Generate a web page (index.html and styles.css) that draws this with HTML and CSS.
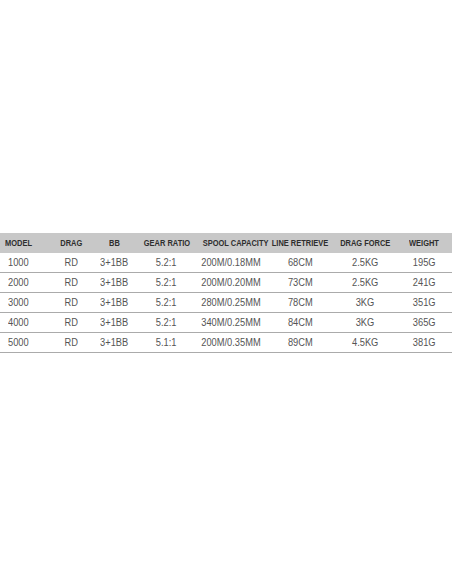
FILE: index.html
```html
<!DOCTYPE html>
<html>
<head>
<meta charset="utf-8">
<link rel="stylesheet" href="styles.css">
</head>
<body>
<div class="page">
  <table class="specs">
    <colgroup>
      <col class="c1"><col class="c2"><col class="c3"><col class="c4"><col class="c5"><col class="c6"><col class="c7"><col class="c8">
    </colgroup>
    <thead>
      <tr><th class="first"><span>MODEL</span></th><th><span>DRAG</span></th><th><span>BB</span></th><th><span>GEAR RATIO</span></th><th><span>SPOOL CAPACITY</span></th><th><span>LINE RETRIEVE</span></th><th><span>DRAG FORCE</span></th><th><span>WEIGHT</span></th></tr>
    </thead>
    <tbody>
      <tr><td class="first"><span>1000</span></td><td><span>RD</span></td><td><span>3+1BB</span></td><td><span>5.2:1</span></td><td><span>200M/0.18MM</span></td><td><span>68CM</span></td><td><span>2.5KG</span></td><td><span>195G</span></td></tr>
      <tr><td class="first"><span>2000</span></td><td><span>RD</span></td><td><span>3+1BB</span></td><td><span>5.2:1</span></td><td><span>200M/0.20MM</span></td><td><span>73CM</span></td><td><span>2.5KG</span></td><td><span>241G</span></td></tr>
      <tr><td class="first"><span>3000</span></td><td><span>RD</span></td><td><span>3+1BB</span></td><td><span>5.2:1</span></td><td><span>280M/0.25MM</span></td><td><span>78CM</span></td><td><span>3KG</span></td><td><span>351G</span></td></tr>
      <tr><td class="first"><span>4000</span></td><td><span>RD</span></td><td><span>3+1BB</span></td><td><span>5.2:1</span></td><td><span>340M/0.25MM</span></td><td><span>84CM</span></td><td><span>3KG</span></td><td><span>365G</span></td></tr>
      <tr><td class="first"><span>5000</span></td><td><span>RD</span></td><td><span>3+1BB</span></td><td><span>5.1:1</span></td><td><span>200M/0.35MM</span></td><td><span>89CM</span></td><td><span>4.5KG</span></td><td><span>381G</span></td></tr>
    </tbody>
  </table>
</div>
</body>
</html>
```

FILE: styles.css
```css
html, body {
  margin: 0;
  padding: 0;
  background: #ffffff;
}
.page {
  width: 452px;
  height: 584px;
  padding-top: 233px;
  box-sizing: border-box;
}
.specs {
  width: 452px;
  border-collapse: collapse;
  table-layout: fixed;
  font-family: "Liberation Sans", Arial, sans-serif;
}
.c1 { width: 50px; }
.c2 { width: 42px; }
.c3 { width: 45px; }
.c4 { width: 59px; }
.c5 { width: 70px; }
.c6 { width: 68px; }
.c7 { width: 62px; }
.c8 { width: 56px; }
.specs span {
  display: inline-block;
  transform-origin: center;
}
.specs th {
  background: #c8c8c8;
  color: #2e2e2e;
  font-size: 9px;
  font-weight: bold;
  height: 20px;
  padding: 0;
  text-align: center;
  white-space: nowrap;
}
.specs th span {
  transform: scaleX(0.83);
}
.specs td {
  color: #555555;
  font-size: 10px;
  height: 19px;
  padding: 0;
  text-align: center;
  white-space: nowrap;
  border-bottom: 1px solid #ababab;
}
.specs td span {
  transform: scaleX(0.93);
}
.specs .first {
  text-align: left;
  padding-left: 8px;
}
.specs th.first {
  padding-left: 5px;
}
.specs .first span {
  transform-origin: left center;
}
```
